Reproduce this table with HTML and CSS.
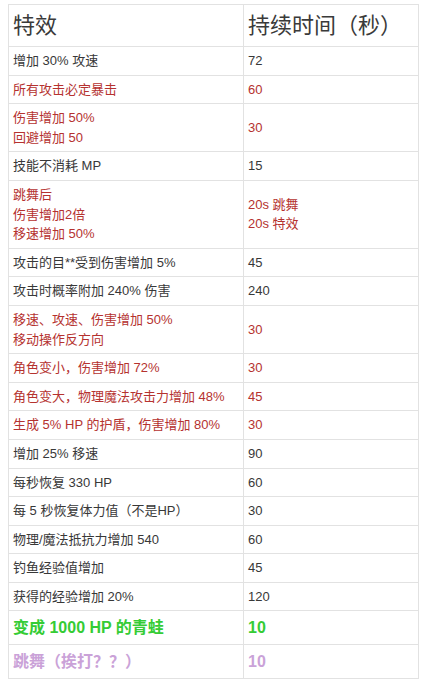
FILE: index.html
```html
<!DOCTYPE html>
<html lang="zh-CN">
<head>
<meta charset="utf-8">
<title>特效</title>
<link rel="stylesheet" href="styles.css">
</head>
<body>
<table class="fx">
  <thead>
    <tr><th class="c1">特效</th><th class="c2">持续时间（秒）</th></tr>
  </thead>
  <tbody>
    <tr><td>增加 30% 攻速</td><td>72</td></tr>
    <tr class="red"><td>所有攻击必定暴击</td><td>60</td></tr>
    <tr class="red"><td>伤害增加 50%<br>回避增加 50</td><td>30</td></tr>
    <tr><td>技能不消耗 MP</td><td>15</td></tr>
    <tr class="red"><td>跳舞后<br>伤害增加2倍<br>移速增加 50%</td><td>20s 跳舞<br>20s 特效</td></tr>
    <tr><td>攻击的目**受到伤害增加 5%</td><td>45</td></tr>
    <tr><td>攻击时概率附加 240% 伤害</td><td>240</td></tr>
    <tr class="red"><td>移速、攻速、伤害增加 50%<br>移动操作反方向</td><td>30</td></tr>
    <tr class="red"><td>角色变小，伤害增加 72%</td><td>30</td></tr>
    <tr class="red"><td>角色变大，物理魔法攻击力增加 48%</td><td>45</td></tr>
    <tr class="red"><td>生成 5% HP 的护盾，伤害增加 80%</td><td>30</td></tr>
    <tr><td>增加 25% 移速</td><td>90</td></tr>
    <tr><td>每秒恢复 330 HP</td><td>60</td></tr>
    <tr><td>每 5 秒恢复体力值（不是HP）</td><td>30</td></tr>
    <tr><td>物理/魔法抵抗力增加 540</td><td>60</td></tr>
    <tr><td>钓鱼经验值增加</td><td>45</td></tr>
    <tr><td>获得的经验增加 20%</td><td>120</td></tr>
    <tr class="big green"><td>变成 1000 HP 的青蛙</td><td>10</td></tr>
    <tr class="big pink"><td>跳舞（挨打？？）</td><td>10</td></tr>
  </tbody>
</table>
</body>
</html>
```
FILE: styles.css
```css
html, body {
  margin: 0;
  padding: 0;
  background: #ffffff;
}
body {
  padding: 4px 0 0 8px;
  font-family: "Liberation Sans", "Noto Sans CJK SC", sans-serif;
  color: #383838;
}
.fx {
  border-collapse: collapse;
  width: 411px;
  table-layout: fixed;
}
.fx th, .fx td {
  border: 1px solid #e2e2e2;
  text-align: left;
  vertical-align: middle;
}
.fx th {
  font-size: 22px;
  font-weight: normal;
  line-height: 31px;
  padding: 5px 4px;
  color: #3a3a3a;
}
.fx .c1 { width: 226px; }
.fx td {
  font-size: 13px;
  line-height: 19.6px;
  padding: 4px 4px;
}
.red td { color: #b5322f; }
.big td {
  font-size: 16px;
  font-weight: bold;
  line-height: 25px;
}
.green td { color: #35cc35; }
.pink td { color: #caa2d8; }
```
